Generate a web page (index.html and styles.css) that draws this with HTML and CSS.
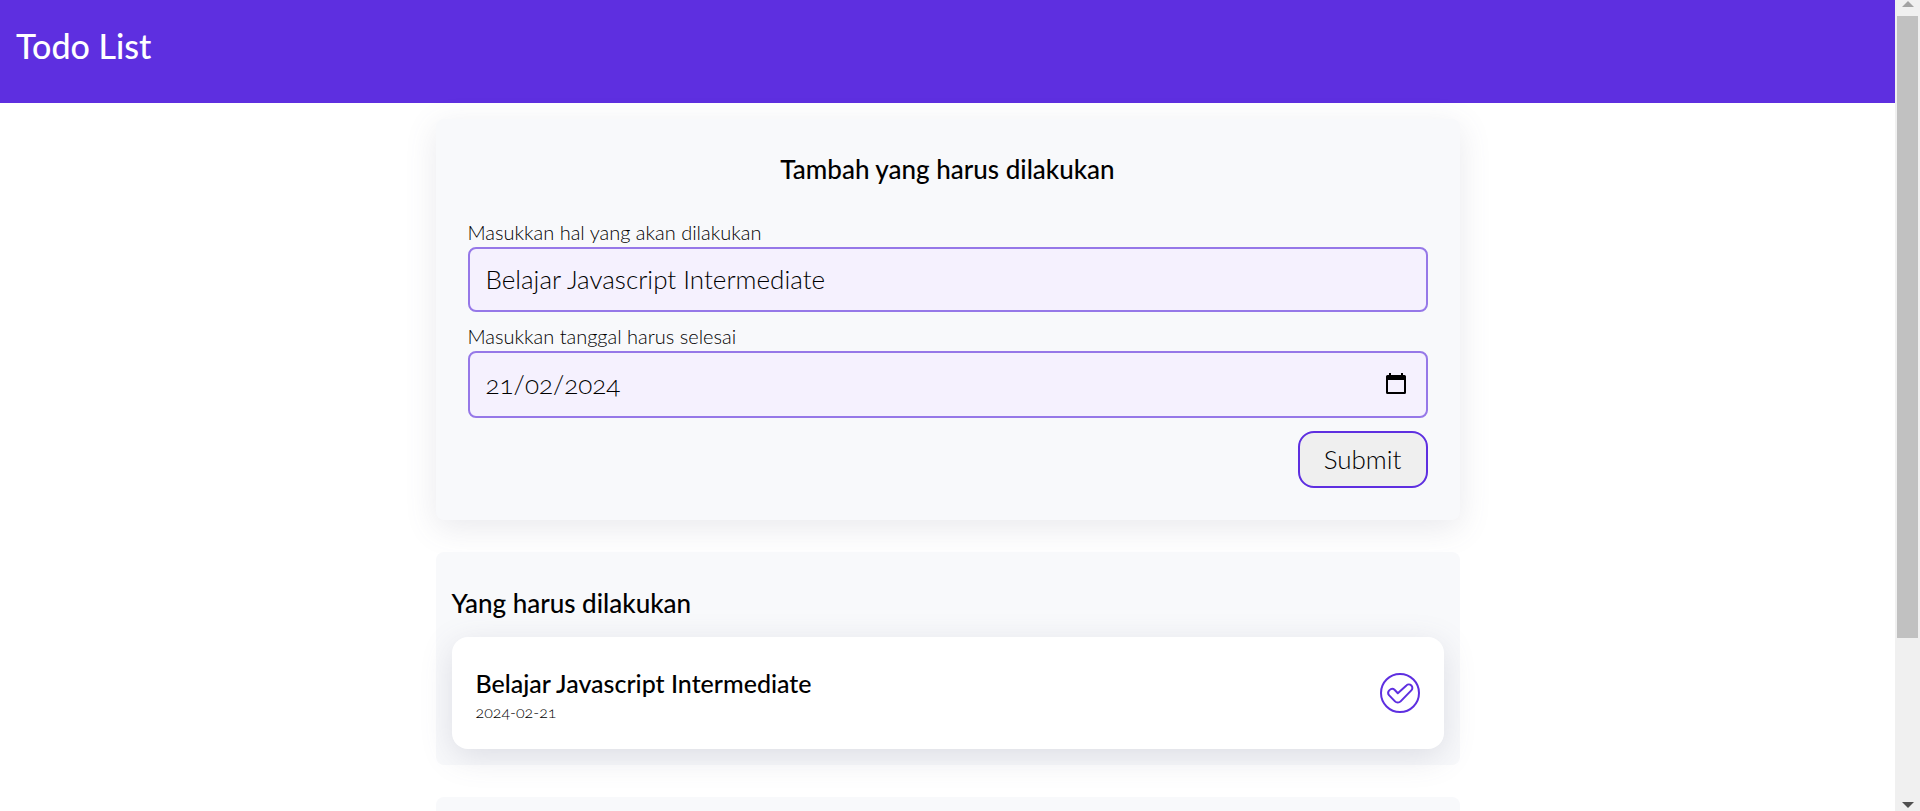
FILE: index.html
```
<!DOCTYPE html>
<html lang="id">
<head>
<meta charset="utf-8">
<title>Todo List</title>
<link rel="stylesheet" href="styles.css">
</head>
<body>
<div class="page">
  <header class="header"><h1 class="header-title">Todo List</h1></header>
  <main class="wrapper">
    <section class="card form-card">
      <h2 class="section-title centered">Tambah yang harus dilakukan</h2>
      <form class="form">
        <div class="field">
          <label class="label" for="title">Masukkan hal yang akan dilakukan</label>
          <input class="input" id="title" type="text" value="Belajar Javascript Intermediate">
        </div>
        <div class="field">
          <label class="label" for="date">Masukkan tanggal harus selesai</label>
          <div class="input date-box">
            <input class="date-input" id="date" type="text" value="21/02/2024">
            <button class="icon-button" type="button">
              <svg width="20" height="22" viewBox="0 0 20 22"><path fill-rule="evenodd" d="M3 0h2v2h10V0h2v2h1.500a1.500 1.500 0 0 1 1.500 1.500v16a1.500 1.500 0 0 1-1.500 1.500h-17a1.500 1.500 0 0 1-1.500-1.500v-16a1.500 1.500 0 0 1 1.500-1.500H3zM2 7v12h16V7z"/></svg>
            </button>
          </div>
        </div>
        <button class="submit" type="submit">Submit</button>
      </form>
    </section>
    <section class="card list-card">
      <h2 class="section-title">Yang harus dilakukan</h2>
      <article class="item">
        <div class="item-text">
          <h3 class="item-title">Belajar Javascript Intermediate</h3>
          <p class="item-date">2024-02-21</p>
        </div>
        <button class="icon-button" type="button">
          <svg width="40" height="40" viewBox="0 0 40 40" fill="none" stroke="#5e2fe0" stroke-width="2" stroke-linejoin="round"><circle cx="20" cy="20" r="19"/><path d="M17.800 20.200l-3-3.200a3.900 3.900 0 0 0-5.600 5.400l5.800 6a3.900 3.900 0 0 0 5.600 0l10.700-11a3.500 3.500 0 0 0-4.900-5z"/></svg>
        </button>
      </article>
    </section>
    <section class="card done-card"></section>
  </main>
</div>
<div class="scrollbar">
  <svg width="12" height="6" viewBox="0 0 12 6"><path d="M0 6L6 0l6 6z" fill="#a3a3a3"/></svg>
  <div class="track"><div class="thumb"></div></div>
  <svg width="12" height="6" viewBox="0 0 12 6"><path d="M0 0h12L6 6z" fill="#505050"/></svg>
</div>
</body>
</html>
```
FILE: styles.css
```
* { box-sizing: border-box; margin: 0; }
body {
  display: flex;
  height: 100vh;
  overflow: hidden;
  background: #fff;
  color: #000;
  font-family: Lato, "Open Sans", sans-serif;
  font-weight: 300;
}
input, button { font: inherit; color: inherit; }
.page { flex: 1; overflow: hidden; }
.header { padding: 24px 16px 35px; background: #5e2fe0; color: #fff; }
.header-title { font-size: 34px; line-height: 44px; font-weight: 500; }
.wrapper {
  display: flex;
  flex-direction: column;
  gap: 32px;
  max-width: 1024px;
  margin: 16px auto;
}
.card { border-radius: 8px; background: #f8f9fb; }
.form-card { padding: 32px; box-shadow: 0 8px 32px rgba(100, 100, 130, 0.14); }
.section-title { font-size: 26px; line-height: 36px; font-weight: 500; }
.centered { text-align: center; }
.form { display: flex; flex-direction: column; gap: 13px; padding-top: 34px; }
.field { display: flex; flex-direction: column; gap: 4px; }
.label { font-size: 20px; line-height: 22px; }
.input {
  width: 100%;
  padding: 14px 16px 15px;
  border: 2px solid #9678e8;
  border-radius: 8px;
  background: #f5f1fe;
  font-size: 26px;
  line-height: 32px;
}
.date-box { display: flex; align-items: center; padding: 15px 20px 16px 16px; }
.date-input {
  flex: 1;
  min-width: 0;
  padding: 0;
  border: 0;
  background: none;
  font-variant-numeric: oldstyle-nums;
}
.icon-button { display: flex; padding: 0; border: 0; background: none; }
.submit {
  align-self: flex-end;
  padding: 10px 24px 11px;
  border: 2px solid #5e2fe0;
  border-radius: 16px;
  background: #efefef;
  font-size: 26px;
  line-height: 32px;
}
.list-card { display: flex; flex-direction: column; gap: 16px; padding: 33px 16px 16px; }
.item {
  display: flex;
  align-items: center;
  justify-content: space-between;
  padding: 24px;
  border-radius: 16px;
  background: #fff;
  box-shadow: 0 8px 32px rgba(100, 100, 130, 0.18);
}
.item-text { padding-top: 6px; }
.item-title { font-size: 25px; line-height: 32px; font-weight: 500; }
.item-date { font-size: 16px; line-height: 26px; font-variant-numeric: oldstyle-nums; }
.done-card { min-height: 200px; }
.scrollbar {
  display: flex;
  flex-direction: column;
  align-items: center;
  gap: 9px;
  width: 25px;
  padding: 1px 2px 3px;
  background: #f0f0f0;
}
.track { flex: 1; align-self: stretch; }
.thumb { height: 80%; background: #c1c1c1; }
```
